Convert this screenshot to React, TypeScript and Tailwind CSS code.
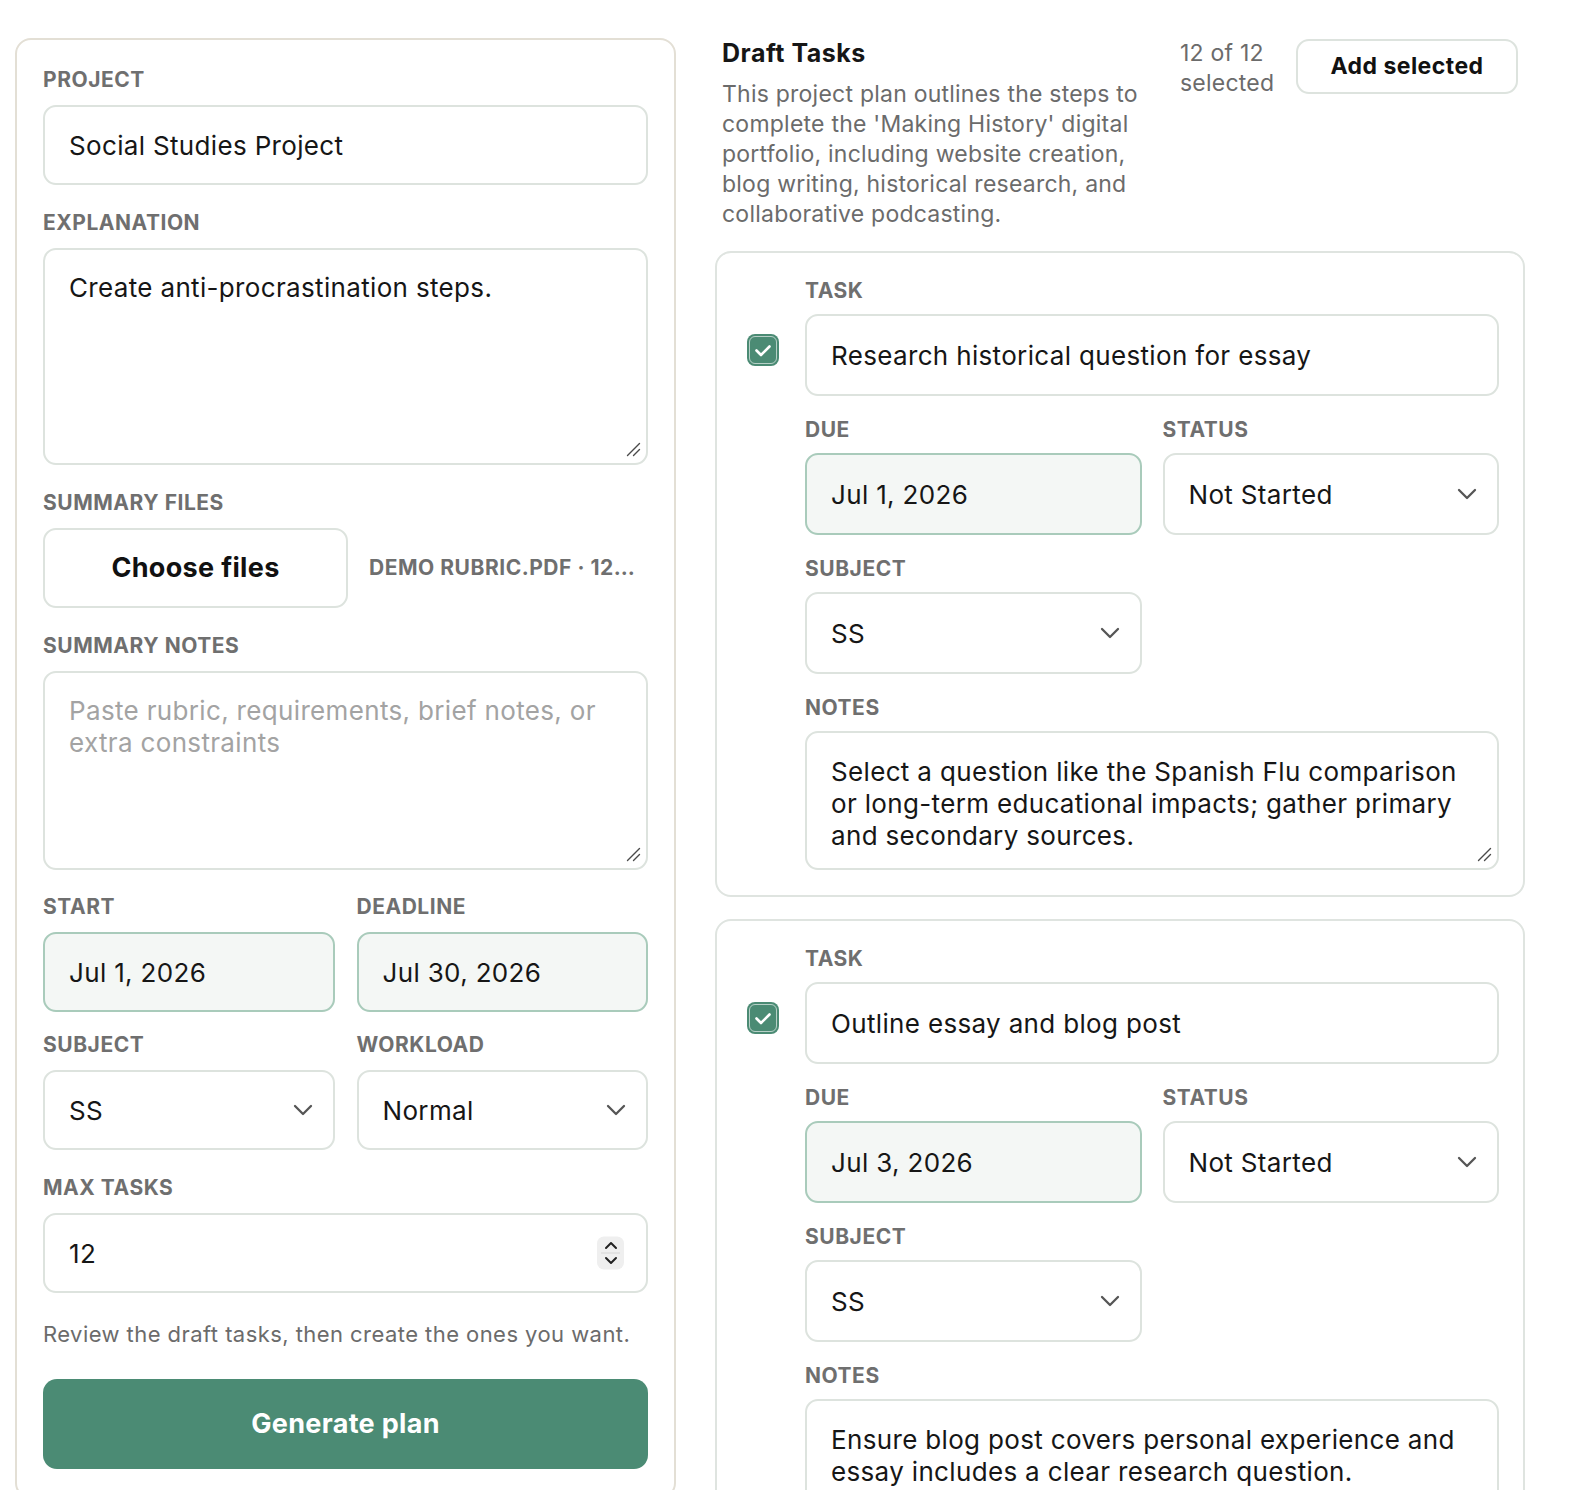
import React from "react";

type Task = {
  title: string;
  due: string;
  status: string;
  subject: string;
  notes: string;
};

const tasks: Task[] = [
  {
    title: "Research historical question for essay",
    due: "Jul 1, 2026",
    status: "Not Started",
    subject: "SS",
    notes:
      "Select a question like the Spanish Flu comparison or long-term educational impacts; gather primary and secondary sources.",
  },
  {
    title: "Outline essay and blog post",
    due: "Jul 3, 2026",
    status: "Not Started",
    subject: "SS",
    notes:
      "Ensure blog post covers personal experience and essay includes a clear research question.",
  },
];

const labelCls =
  "block text-[21px] leading-[24px] font-bold uppercase tracking-[0.025em] text-[#6f6f6f]";
// height is added per place: h-[80px] in the plan form, h-[82px] in task cards
const inputCls =
  "w-full rounded-[13px] border-2 border-[#dde3de] bg-white px-[24px] text-[26px] tracking-[0.013em] text-[#161616] outline-none";
const dateCls =
  "w-full rounded-[13px] border-2 border-[#a9cbbb] bg-[#f4f7f5] px-[24px] text-[26px] tracking-[0.013em] text-[#161616] outline-none";
const areaCls =
  "block w-full resize-none rounded-[13px] border-2 border-[#dde3de] bg-white px-[24px] pb-[16px] text-[26px] leading-[32px] tracking-[0.013em] text-[#161616] outline-none placeholder:text-[#a3a3a3]";

function Field({
  label,
  children,
  tight,
}: {
  label: string;
  children: React.ReactNode;
  tight?: boolean;
}) {
  return (
    <div className={tight ? "flex flex-col gap-[11px]" : "flex flex-col gap-[13px]"}>
      <span className={labelCls}>{label}</span>
      {children}
    </div>
  );
}

function Chevron() {
  return (
    <svg width="20" height="12" viewBox="0 0 20 12" fill="none">
      <path d="M2 2l8 8 8-8" stroke="#555" strokeWidth="2.3" strokeLinecap="round" strokeLinejoin="round" />
    </svg>
  );
}

function Select({ value, options, h }: { value: string; options: string[]; h: string }) {
  return (
    <div className="relative">
      <select defaultValue={value} className={inputCls + " appearance-none " + h}>
        {options.map((o) => (
          <option key={o}>{o}</option>
        ))}
      </select>
      <span className="pointer-events-none absolute right-[22px] top-1/2 -translate-y-1/2">
        <Chevron />
      </span>
    </div>
  );
}

// textarea with a drawn resize grip in the corner
function Area({ className, value, placeholder }: { className: string; value?: string; placeholder?: string }) {
  return (
    <div className="relative">
      <textarea className={areaCls + " " + className} defaultValue={value} placeholder={placeholder} />
      <svg
        className="pointer-events-none absolute bottom-[8px] right-[7px]"
        width="15"
        height="15"
        viewBox="0 0 15 15"
        fill="none"
      >
        <path d="M1.5 13.5L13.5 1.5M7.5 13.5l6-6" stroke="#4a4a4a" strokeWidth="1.4" strokeLinecap="round" />
      </svg>
    </div>
  );
}

function Stepper() {
  return (
    <span className="pointer-events-none absolute right-[24px] top-1/2 flex h-[33px] w-[27px] -translate-y-1/2 flex-col items-center justify-center gap-[3px] rounded-[7px] bg-[#efefef]">
      <svg width="14" height="8" viewBox="0 0 14 8" fill="none">
        <path d="M2 6.5l5-5 5 5" stroke="#222" strokeWidth="2" strokeLinecap="round" strokeLinejoin="round" />
      </svg>
      <span className="h-px w-[19px] bg-[#d6d6d6]" />
      <svg width="14" height="8" viewBox="0 0 14 8" fill="none">
        <path d="M2 1.5l5 5 5-5" stroke="#222" strokeWidth="2" strokeLinecap="round" strokeLinejoin="round" />
      </svg>
    </span>
  );
}

function Checkbox() {
  return (
    <span className="flex h-[32px] w-[32px] items-center justify-center rounded-[8px] bg-[#4b8b74] p-[2px]">
      <span className="flex h-full w-full items-center justify-center rounded-[6px] border border-white/60">
        <svg width="18" height="13" viewBox="0 0 18 13" fill="none">
          <path d="M2.5 6.5l4.5 4.5L15.5 2.5" stroke="#fff" strokeWidth="2.6" strokeLinecap="round" strokeLinejoin="round" />
        </svg>
      </span>
    </span>
  );
}

function TaskCard({ task }: { task: Task }) {
  return (
    <div className="rounded-[16px] border-2 border-[#dfe4e0] bg-white px-[24px] pb-[25px] pt-[26px]">
      <div className="grid grid-cols-[44px_1fr] gap-x-[20px]">
        <div />
        <span className={labelCls + " mb-[11px]"}>Task</span>
        <div className="flex items-center justify-center pb-[10px]">
          <Checkbox />
        </div>
        <input className={inputCls + " h-[82px]"} defaultValue={task.title} />
        <div />
        <div className="mt-[22px] flex flex-col gap-[22px]">
          <div className="grid grid-cols-2 gap-x-[21px]">
            <Field label="Due" tight>
              <input className={dateCls + " h-[82px]"} defaultValue={task.due} readOnly />
            </Field>
            <Field label="Status" tight>
              <Select h="h-[82px]" value={task.status} options={["Not Started", "In Progress", "Done"]} />
            </Field>
          </div>
          <div className="grid grid-cols-2 gap-x-[21px]">
            <Field label="Subject" tight>
              <Select h="h-[82px]" value={task.subject} options={["SS", "ELA", "Math", "Science"]} />
            </Field>
          </div>
          <Field label="Notes" tight>
            <Area className="h-[139px] pt-[23px]" value={task.notes} />
          </Field>
        </div>
      </div>
    </div>
  );
}

export default function App() {
  return (
    <div className="min-h-screen bg-white font-['Inter',sans-serif] text-[#161616]">
      <div className="flex items-start gap-[39px] px-[15px] pt-[38px]">
        {/* Plan form */}
        <div className="w-[661px] shrink-0 rounded-[16px] border-2 border-[#e3dfd5] bg-white px-[26px] pb-[28px] pt-[28px]">
          <div className="flex flex-col gap-[26px]">
            <Field label="Project">
              <input className={inputCls + " h-[80px]"} defaultValue="Social Studies Project" />
            </Field>
            <Field label="Explanation">
              <Area className="h-[217px] pt-[22px]" value="Create anti-procrastination steps." />
            </Field>
            <Field label="Summary files">
              <div className="flex items-center gap-[21px]">
                <button className="h-[80px] w-[305px] shrink-0 rounded-[13px] border-2 border-[#dde3de] bg-white text-[27px] font-bold tracking-[0.012em] text-[#111]">
                  Choose files
                </button>
                <span className="whitespace-nowrap text-[21px] font-bold uppercase tracking-[0.025em] text-[#6f6f6f]">
                  Demo rubric.pdf · 12…
                </span>
              </div>
            </Field>
            <Field label="Summary notes">
              <Area
                className="h-[199px] pt-[22px]"
                placeholder="Paste rubric, requirements, brief notes, or extra constraints"
              />
            </Field>
            <div className="-mt-[1px] grid grid-cols-2 gap-x-[22px] gap-y-[21px]">
              <Field label="Start">
                <input className={dateCls + " h-[80px]"} defaultValue="Jul 1, 2026" readOnly />
              </Field>
              <Field label="Deadline">
                <input className={dateCls + " h-[80px]"} defaultValue="Jul 30, 2026" readOnly />
              </Field>
              <Field label="Subject">
                <Select h="h-[80px]" value="SS" options={["SS", "ELA", "Math", "Science"]} />
              </Field>
              <Field label="Workload">
                <Select h="h-[80px]" value="Normal" options={["Light", "Normal", "Heavy"]} />
              </Field>
            </div>
            <Field label="Max tasks">
              <div className="relative">
                <input className={inputCls + " h-[80px]"} defaultValue="12" inputMode="numeric" />
                <Stepper />
              </div>
            </Field>
            <div className="flex flex-col gap-[30px]">
              <p className="text-[22px] leading-[30px] tracking-[0.02em] text-[#6b6b6b]">
                Review the draft tasks, then create the ones you want.
              </p>
              <button className="h-[90px] w-full rounded-[14px] bg-[#4b8b74] text-[27px] font-bold tracking-[0.012em] text-white">
                Generate plan
              </button>
            </div>
          </div>
        </div>

        {/* Draft tasks */}
        <div className="flex w-[810px] shrink-0 flex-col gap-[22px]">
          <div className="flex items-start gap-[15px] px-[7px]">
            <div className="flex-1">
              <h2 className="text-[25px] font-bold leading-[30px] tracking-[0.02em] text-[#161616]">Draft Tasks</h2>
              <p className="mt-[11px] text-[23px] leading-[30px] tracking-[0.01em] text-[#6b6b6b]">
                This project plan outlines the steps to complete the 'Making History' digital portfolio,
                including website creation, blog writing, historical research, and collaborative podcasting.
              </p>
            </div>
            <span className="ml-[3px] w-[101px] shrink-0 text-[23px] leading-[30px] tracking-[0.01em] text-[#6b6b6b]">
              12 of 12 selected
            </span>
            <button className="mt-[1px] h-[55px] w-[222px] shrink-0 rounded-[13px] border-2 border-[#dde3de] bg-white text-[23px] font-bold tracking-[0.02em] text-[#111]">
              Add selected
            </button>
          </div>
          <div className="flex flex-col gap-[22px]">
            {tasks.map((t) => (
              <TaskCard key={t.title} task={t} />
            ))}
          </div>
        </div>
      </div>
    </div>
  );
}
